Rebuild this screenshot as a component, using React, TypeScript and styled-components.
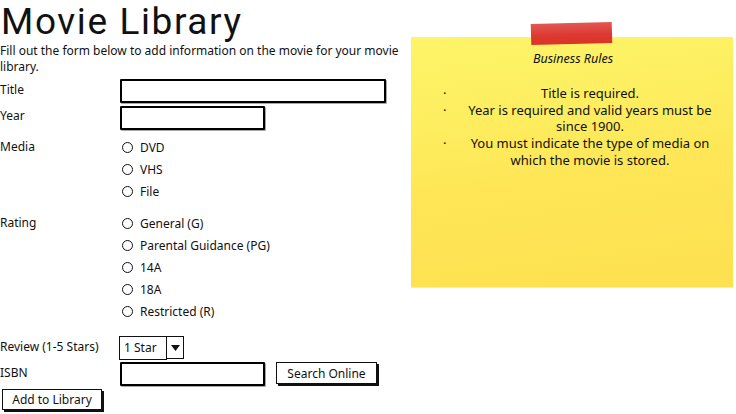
import React from "react";
import styled, { createGlobalStyle } from "styled-components";

const Global = createGlobalStyle`
  html, body { margin: 0; padding: 0; background: #fff; }
  body { font-family: "Noto Sans", "Open Sans", sans-serif; color: #111; }
  * { box-sizing: border-box; }
`;

const Page = styled.div`
  width: 736px;
  height: 414px;
  display: flex;
  overflow: hidden;
  position: relative;
`;

const FormCol = styled.div`
  width: 411px;
  flex: none;
  display: flex;
  flex-direction: column;
`;

const Title = styled.h1`
  margin: 0;
  padding: 0 0 0 1px;
  font-family: Roboto, "Noto Sans", sans-serif;
  font-size: 37px;
  font-weight: 400;
  line-height: 44px;
  letter-spacing: 1.6px;
`;

const Intro = styled.p`
  margin: -1px 0 0 0;
  font-size: 12px;
  line-height: 16px;
  width: 408px;
`;

const Row = styled.div<{ $mt?: number }>`
  display: flex;
  align-items: flex-start;
  margin-top: ${(p) => p.$mt ?? 0}px;
`;

const Label = styled.div<{ $pt?: number }>`
  width: 120px;
  flex: none;
  font-size: 12px;
  line-height: 16px;
  padding-top: ${(p) => p.$pt ?? 0}px;
`;

const TextBox = styled.div<{ $w: number }>`
  width: ${(p) => p.$w}px;
  height: 24px;
  border: 2px solid #000;
  border-radius: 1px;
  background: #fff;
  box-shadow: 1px 1px 0 rgba(0,0,0,0.35);
`;

const RadioList = styled.div`
  display: flex;
  flex-direction: column;
`;

const RadioItem = styled.div`
  display: flex;
  align-items: center;
  height: 22px;
  font-size: 12px;
  padding-left: 2px;
`;

const Circle = styled.span`
  width: 11px;
  height: 11px;
  border: 1.5px solid #111;
  border-radius: 50%;
  margin-right: 7px;
  flex: none;
`;

const Select = styled.div`
  display: flex;
  height: 24px;
  margin-left: -1px;
`;

const SelectValue = styled.div`
  width: 48px;
  height: 24px;
  border: 1.5px solid #111;
  font-size: 12px;
  line-height: 21px;
  padding-left: 4px;
  background: #fff;
`;

const SelectArrow = styled.div`
  width: 17px;
  height: 23px;
  border: 1.5px solid #111;
  border-left: none;
  display: flex;
  align-items: center;
  justify-content: center;
  background: #fff;
`;

const ButtonSlot = styled.div`
  margin-left: 11px;
`;

const FooterRow = styled.div`
  margin-top: 3px;
  padding-left: 2px;
`;

const Button = styled.div<{ $w: number; $h: number }>`
  width: ${(p) => p.$w}px;
  height: ${(p) => p.$h}px;
  border: 1.5px solid #111;
  background: #fff;
  box-shadow: 2px 2px 0 #111;
  font-size: 12px;
  display: flex;
  align-items: center;
  justify-content: center;
`;

const NoteArea = styled.div`
  flex: 1;
  position: relative;
  padding-top: 37px;
`;

const Note = styled.div`
  width: 322px;
  height: 250px;
  background: linear-gradient(172deg, #fef468 0%, #fdee60 30%, #fee656 55%, #fde050 100%);
  box-shadow: 0 1px 1px rgba(0,0,0,0.08);
  padding-top: 14px;
  display: flex;
  flex-direction: column;
  align-items: stretch;
`;

const Tape = styled.div`
  position: absolute;
  left: 120px;
  top: 23px;
  width: 81px;
  height: 21px;
  background: linear-gradient(180deg, #e0504a 0%, #dc2f29 55%, #d82a24 100%);
  transform: rotate(-1.5deg);
  opacity: 0.95;
`;

const NoteHeading = styled.div`
  font-style: italic;
  font-size: 12.5px;
  text-align: center;
  line-height: 16px;
  margin-left: 2px;
`;

const Rules = styled.ul`
  list-style: none;
  margin: 18px 0 0 0;
  padding: 0;
  font-size: 13px;
  line-height: 16.7px;
`;

const Rule = styled.li`
  display: flex;
`;

const Bullet = styled.span`
  width: 54px;
  flex: none;
  padding-left: 32px;
`;

const RuleText = styled.span`
  width: 250px;
  text-align: center;
`;

export default function App() {
  return (
    <>
      <Global />
      <Page>
        <FormCol>
          <Title>Movie Library</Title>
          <Intro>Fill out the form below to add information on the movie for your movie library.</Intro>
          <Row $mt={4}>
            <Label $pt={3}>Title</Label>
            <TextBox $w={266} />
          </Row>
          <Row $mt={3}>
            <Label $pt={2}>Year</Label>
            <TextBox $w={145} />
          </Row>
          <Row $mt={6}>
            <Label $pt={3}>Media</Label>
            <RadioList>
              <RadioItem><Circle />DVD</RadioItem>
              <RadioItem><Circle />VHS</RadioItem>
              <RadioItem><Circle />File</RadioItem>
            </RadioList>
          </Row>
          <Row $mt={10}>
            <Label $pt={3}>Rating</Label>
            <RadioList>
              <RadioItem><Circle />General (G)</RadioItem>
              <RadioItem><Circle />Parental Guidance (PG)</RadioItem>
              <RadioItem><Circle />14A</RadioItem>
              <RadioItem><Circle />18A</RadioItem>
              <RadioItem><Circle />Restricted (R)</RadioItem>
            </RadioList>
          </Row>
          <Row $mt={14}>
            <Label $pt={3}>Review (1-5 Stars)</Label>
            <Select>
              <SelectValue>1 Star</SelectValue>
              <SelectArrow>
                <svg width="9" height="6" viewBox="0 0 9 6"><path d="M0 0 L9 0 L4.5 6 Z" fill="#111" /></svg>
              </SelectArrow>
            </Select>
          </Row>
          <Row $mt={2}>
            <Label $pt={3}>ISBN</Label>
            <TextBox $w={145} />
            <ButtonSlot>
              <Button $w={101} $h={22}>Search Online</Button>
            </ButtonSlot>
          </Row>
          <FooterRow>
            <Button $w={100} $h={21}>Add to Library</Button>
          </FooterRow>
        </FormCol>
        <NoteArea>
          <Note>
            <NoteHeading>Business Rules</NoteHeading>
            <Rules>
              <Rule><Bullet>·</Bullet><RuleText>Title is required.</RuleText></Rule>
              <Rule><Bullet>·</Bullet><RuleText>Year is required and valid years must be since 1900.</RuleText></Rule>
              <Rule><Bullet>·</Bullet><RuleText>You must indicate the type of media on which the movie is stored.</RuleText></Rule>
            </Rules>
          </Note>
          <Tape />
        </NoteArea>
      </Page>
    </>
  );
}
